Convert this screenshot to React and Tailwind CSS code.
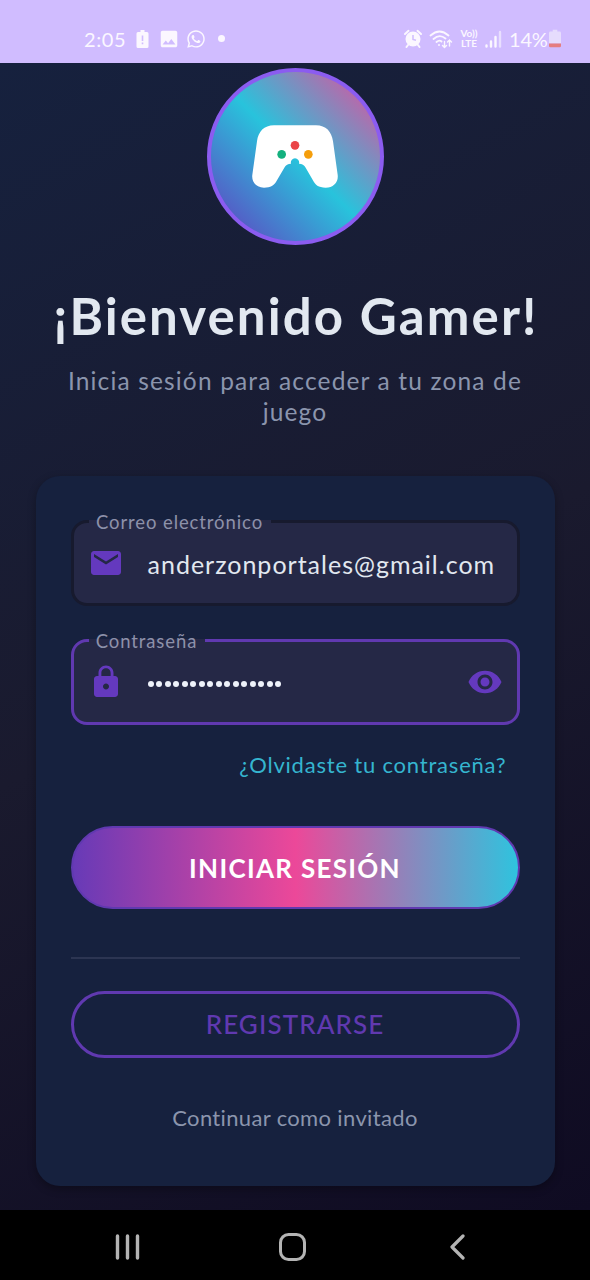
import React from 'react';
import { MdEmail, MdLock, MdVisibility, MdImage } from 'react-icons/md';
import { FaWhatsapp } from 'react-icons/fa';

function StatusBar() {
  return (
    <header className="flex h-[63px] shrink-0 items-center justify-between bg-[#d0bcff] pt-[14px] pl-[84px] pr-[29px] text-[#fbf7ff]">
      <div className="flex items-center">
        <span className="w-[42px] text-[20px] leading-6 tracking-[0.6px] whitespace-nowrap">2:05</span>
        <svg className="ml-[10px] h-[18px] w-[13px]" viewBox="0 0 12 18">
          <path fill="currentColor" d="M4 0h4v2h2.500q1.500 0 1.500 1.500v13q0 1.500-1.500 1.500h-9Q0 18 0 16.500v-13Q0 2 1.500 2H4z" />
          <path stroke="#d0bcff" strokeWidth="1.600" d="M6 5.500v5.500M6 12.500v1.700" />
        </svg>
        <MdImage className="ml-[9px] size-[22px]" />
        <FaWhatsapp className="ml-[6px] size-[20px]" />
        <span className="ml-[12px] size-[7px] rounded-full bg-[#fbf7ff]" />
      </div>
      <div className="flex items-center">
        <svg className="h-[19px] w-[18px]" viewBox="0 0 18 19">
          <circle cx="9" cy="10" r="7.500" fill="currentColor" />
          <path d="M1 5 4.500 1.800M17 5l-3.500-3.200M4 16l-1.500 2M14 16l1.500 2" stroke="currentColor" strokeWidth="2" strokeLinecap="round" />
          <path d="M9 6v4.500l3 .8" fill="none" stroke="#d0bcff" strokeWidth="1.500" />
        </svg>
        <svg className="ml-[7px] h-[20px] w-[24px]" viewBox="0 0 24 20" fill="none" stroke="currentColor" strokeWidth="1.800" strokeLinecap="round">
          <path d="M1.500 6.500q9-8 18 0M4.500 10q6-5.500 12-.5M7.500 13q3-2.500 5 -.5" />
          <circle cx="10" cy="16" r="1" fill="currentColor" stroke="none" />
          <path strokeWidth="1.400" d="M15.500 12.500v6m-2-2 2 2 2-2M20.500 17v-6m-2 2 2-2 2 2" />
        </svg>
        <span className="ml-[6px] flex w-[20px] flex-col items-center text-[10px] leading-[9.500px] font-bold whitespace-nowrap">
          <span>Vo))</span>
          <span>LTE</span>
        </span>
        <svg className="ml-[6px] h-[18px] w-[17px]" viewBox="0 0 17 18" stroke="currentColor" strokeWidth="2.400" strokeLinecap="round">
          <path d="M1.500 15.500v1M6 11.500v5M10.500 7v9.500" />
          <path d="M15 2v14.500" opacity=".6" />
        </svg>
        <span className="ml-[7px] w-[40px] text-[20px] leading-6 tracking-[-0.200px] whitespace-nowrap">14%</span>
        <svg className="h-[19px] w-[12px]" viewBox="0 0 13 19">
          <path fill="#e6dcfd" d="M4 0h5v2h2.500Q13 2 13 3.500V15H0V3.500Q0 2 1.500 2H4z" />
          <path fill="#e57d80" d="M0 15h13v2.500q0 1.500-1.500 1.500h-10Q0 19 0 17.500z" />
        </svg>
      </div>
    </header>
  );
}

function Logo() {
  return (
    <div className="flex size-[177px] shrink-0 items-center justify-center rounded-full border-[4px] border-[#8b5cf0] bg-[linear-gradient(45deg,#6439be,#28c3dc_50%,#ec4899)]">
      <svg className="h-[63px] w-[86px]" viewBox="0 0 258 189">
        <path
          fill="#fff"
          d="M66 1H192C222 1 239 20 243 49L257 149C260 172 244 188 221 188C199 188 190 181 181 163L161 128C157 120 150 116 141 116A12.500 12.500 0 1 0 117 116C108 116 101 120 97 128L75 166C66 183 56 188 36 188C13 188-2 172 1 149L15 49C19 20 36 1 66 1Z"
        />
        <circle cx="129" cy="61" r="13" fill="#ea4548" />
        <circle cx="89" cy="88" r="13" fill="#14b07e" />
        <circle cx="169" cy="88" r="13" fill="#f59e0b" />
      </svg>
    </div>
  );
}

function Field({ label, labelClass, borderClass, children }) {
  return (
    <div className={`relative flex shrink-0 items-center rounded-[16px] border-[3px] bg-[#252846] ${borderClass}`}>
      <span className={`absolute -top-[3px] left-[15px] flex h-[3px] items-center justify-center bg-[#252846] text-[18.500px] whitespace-nowrap text-[#8d91aa] ${labelClass}`}>
        <span className="pt-[2px]">{label}</span>
      </span>
      {children}
    </div>
  );
}

function NavBar() {
  return (
    <nav className="flex h-[70px] shrink-0 items-center bg-black pt-[3px] pl-[115px] text-[#b4b4b4]">
      <svg className="h-[26px] w-[25px]" viewBox="0 0 25 26" stroke="currentColor" strokeWidth="3.400" strokeLinecap="round">
        <path d="M2.500 2v22M12.500 2v22M22.500 2v22" />
      </svg>
      <svg className="ml-[139px] h-[28px] w-[27px]" viewBox="0 0 27 28" fill="none" stroke="currentColor" strokeWidth="3">
        <rect x="1.500" y="1.500" width="24" height="25" rx="8" />
      </svg>
      <svg className="ml-[144px] h-[26px] w-[15px]" viewBox="0 0 15 26" fill="none" stroke="currentColor" strokeWidth="3.200" strokeLinecap="round" strokeLinejoin="round">
        <path d="M13 2 2 13l11 11" />
      </svg>
    </nav>
  );
}

export default function App() {
  return (
    <div className="flex h-[1280px] w-[590px] flex-col overflow-hidden font-['Lato','Open_Sans',sans-serif]">
      <StatusBar />
      <main className="flex h-[1147px] shrink-0 flex-col items-center bg-[linear-gradient(153deg,#16213e_0%,#1a1a2e_50%,#0f0b22_100%)] pt-[5px]">
        <Logo />
        <h1 className="mt-[39px] pl-[2px] text-[51px] leading-[64px] font-bold tracking-[2.100px] whitespace-nowrap text-[#e2e8f0]">¡Bienvenido Gamer!</h1>
        <p className="mt-[17px] text-center text-[24.500px] leading-[31px] tracking-[1.150px] whitespace-nowrap text-[#8b95ad]">
          Inicia sesión para acceder a tu zona de
          <br />
          juego
        </p>
        <section className="mt-[49px] flex h-[710px] w-[519px] shrink-0 flex-col rounded-[24px] bg-[#16213e] px-[35px] pt-[44px] shadow-[0_3px_8px_rgba(0,0,0,0.3)]">
          <Field label="Correo electrónico" labelClass="w-[182px] tracking-[0.900px]" borderClass="h-[86px] border-[#171a2e]">
            <MdEmail className="ml-[14px] size-[36px] text-[#6439be]" />
            <span className="ml-[24px] pt-[3px] text-[25px] tracking-[1px] whitespace-nowrap text-[#e2e8f0]">anderzonportales@gmail.com</span>
          </Field>
          <div className="h-[33px] shrink-0" />
          <Field label="Contraseña" labelClass="w-[116px] tracking-[0.900px]" borderClass="h-[86px] border-[#6039b0]">
            <MdLock className="ml-[14px] size-[36px] text-[#6439be]" />
            <span className="ml-[24px] flex gap-[2.500px] pt-[3px]">
              {Array.from({ length: 16 }, (_, i) => (
                <span key={i} className="size-[6px] rounded-full bg-[#eef2fa]" />
              ))}
            </span>
            <MdVisibility className="mr-[14px] ml-auto size-[36px] text-[#6439be]" />
          </Field>
          <a className="mt-[24px] mr-[13px] self-end text-[22px] leading-[32px] tracking-[0.800px] whitespace-nowrap text-[#35b5cf]">¿Olvidaste tu contraseña?</a>
          <button className="mt-[45px] h-[83px] shrink-0 rounded-full border-2 border-[#6039b0] bg-[linear-gradient(90deg,#673ab7,#ec4899_50%,#2fc3de)] pt-[2px] text-[26px] font-bold tracking-[1.300px] text-white">
            INICIAR SESIÓN
          </button>
          <div className="mt-[48px] h-[2px] shrink-0 bg-[#2c3552]" />
          <button className="mt-[32px] h-[67px] shrink-0 rounded-full border-[3px] border-[#6039b0] text-[26px] font-medium tracking-[1.100px] text-[#6039b0]">
            REGISTRARSE
          </button>
          <a className="mt-[44px] text-center text-[22px] leading-[32px] tracking-[0.350px] whitespace-nowrap text-[#8b95ad]">Continuar como invitado</a>
        </section>
      </main>
      <NavBar />
    </div>
  );
}
